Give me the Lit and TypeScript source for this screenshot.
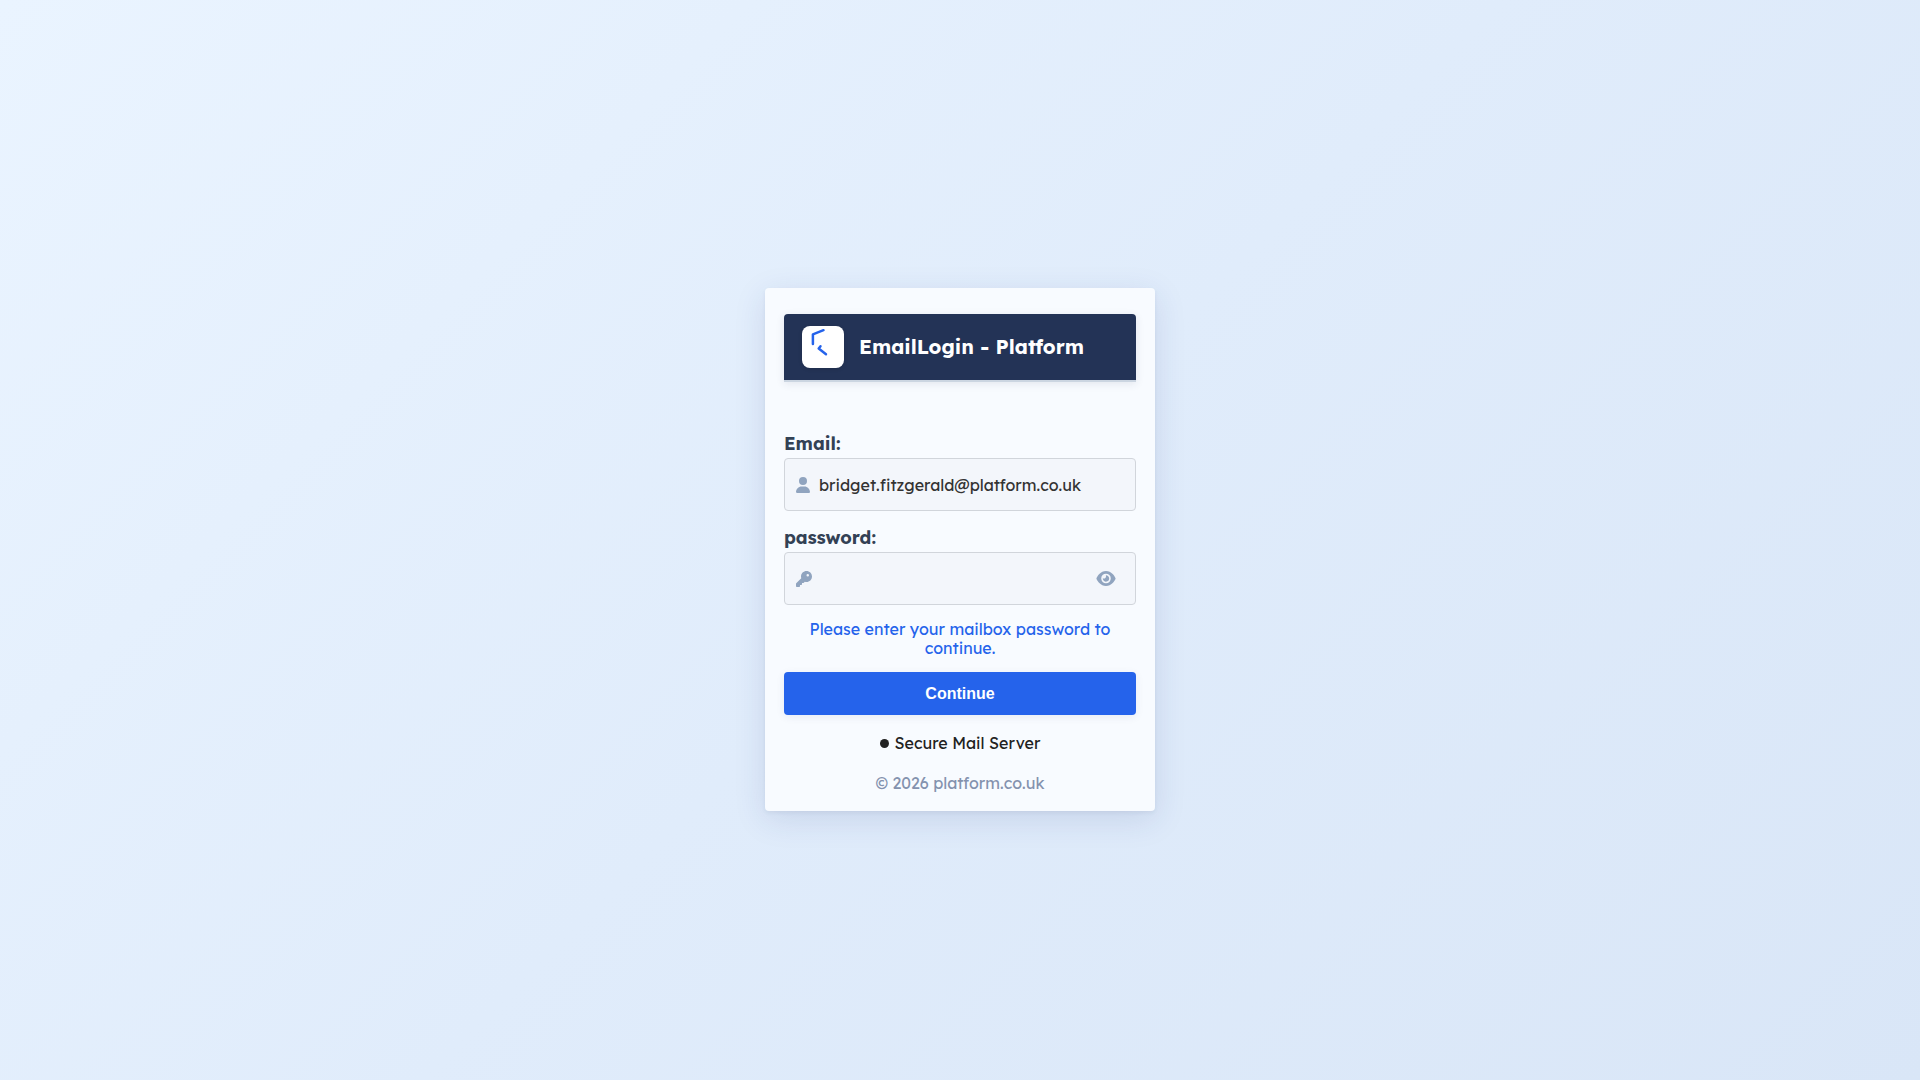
import { LitElement, html, css } from "lit";
import { customElement, state } from "lit/decorators.js";

@customElement("app-root")
export class AppRoot extends LitElement {
  static styles = css`
    :host {
      display: block;
      font-family: Lexend, Inter, "Liberation Sans", sans-serif;
      color: #222222;
    }
    * {
      box-sizing: border-box;
    }
    .page {
      min-height: 100vh;
      display: flex;
      align-items: center;
      justify-content: center;
      padding: 35px 16px 16px;
      background: linear-gradient(135deg, #eaf4ff 0%, #e0ecfb 50%, #d9e6f7 100%);
    }
    .card {
      width: 100%;
      max-width: 390px;
      padding: 26px 19px 18px;
      background: #f8fbff;
      border-radius: 4px;
      box-shadow: 0 8px 32px rgba(36, 52, 120, 0.13), 0 2px 4px rgba(36, 52, 87, 0.06);
    }
    .banner {
      display: flex;
      align-items: center;
      gap: 15px;
      padding: 12px 18px;
      margin-bottom: 50px;
      background: #233356;
      border-bottom: 2px solid #cbd5e1;
      border-radius: 4px 4px 0 0;
      box-shadow: 0 2px 8px rgba(36, 52, 87, 0.1);
    }
    .logo {
      display: flex;
      width: 42px;
      height: 42px;
      background: #ffffff;
      border-radius: 8px;
      box-shadow: 0 1px 4px rgba(0, 0, 0, 0.12);
    }
    .title {
      margin: 0;
      font-size: 20px;
      line-height: 26px;
      font-weight: 700;
      color: #ffffff;
    }
    .field {
      margin-bottom: 15px;
    }
    .label {
      display: block;
      padding-bottom: 2px;
      font-size: 18px;
      line-height: 24px;
      font-weight: 700;
      color: #334155;
    }
    .box {
      display: flex;
      align-items: center;
      height: 53px;
      padding: 0 19px 0 11px;
      gap: 9px;
      background: #f3f6fb;
      border: 1px solid #d1d5db;
      border-radius: 4px;
    }
    .box:focus-within {
      border-color: #2563eb;
    }
    .input {
      flex: 1;
      min-width: 0;
      height: 100%;
      padding: 0;
      border: 0;
      outline: 0;
      background: transparent;
      font-family: inherit;
      font-size: 16px;
      font-weight: 400;
      color: #333333;
    }
    .toggle {
      display: flex;
      padding: 0;
      border: 0;
      background: transparent;
      cursor: pointer;
    }
    .icon {
      display: block;
      flex: none;
      fill: #90a4bf;
    }
    .message {
      margin: 0 0 14px;
      padding: 0 16px;
      text-align: center;
      font-size: 16px;
      line-height: 19px;
      font-weight: 400;
      color: #2563eb;
    }
    .submit {
      display: block;
      width: 100%;
      height: 43px;
      margin-bottom: 18px;
      border: 0;
      border-radius: 4px;
      background: #2563eb;
      box-shadow: 0 2px 8px rgba(36, 52, 120, 0.08);
      font-family: "Liberation Sans", sans-serif;
      font-size: 16px;
      font-weight: 700;
      color: #ffffff;
      cursor: pointer;
    }
    .secure {
      display: flex;
      align-items: center;
      justify-content: center;
      gap: 6px;
      margin: 0 0 20px;
      font-size: 16px;
      line-height: 20px;
      font-weight: 400;
    }
    .dot {
      width: 9px;
      height: 9px;
      border-radius: 50%;
      background: #222222;
    }
    .copyright {
      margin: 0;
      text-align: center;
      font-size: 16px;
      line-height: 20px;
      font-weight: 400;
      color: #8492ae;
    }
  `;

  @state() private visible = false;

  private toggleVisible() {
    this.visible = !this.visible;
  }

  render() {
    return html`
      <main class="page">
        <section class="card">
          <header class="banner">
            <span class="logo">
              <svg width="42" height="42" viewBox="0 0 42 42" fill="none" stroke="#2563eb" stroke-width="2.5" stroke-linecap="round" stroke-linejoin="round" aria-hidden="true">
                <path d="M21.500 4.200 L10.900 8.300 V18" />
                <path d="M18.500 20.300 L16.700 22.600 L24 28.200" />
              </svg>
            </span>
            <h1 class="title">EmailLogin - Platform</h1>
          </header>

          <div class="field">
            <label class="label" for="email">Email:</label>
            <div class="box">
              <svg class="icon" width="14" height="16" viewBox="0 0 448 512" aria-hidden="true">
                <path d="M224 256A128 128 0 1 0 224 0a128 128 0 1 0 0 256zm-45.700 48C79.800 304 0 383.800 0 482.300C0 498.700 13.300 512 29.700 512H418.300c16.400 0 29.700-13.300 29.700-29.700C448 383.800 368.200 304 269.700 304H178.300z" />
              </svg>
              <input class="input" id="email" type="email" value="bridget.fitzgerald@platform.co.uk" readonly />
            </div>
          </div>

          <div class="field">
            <label class="label" for="password">password:</label>
            <div class="box">
              <svg class="icon" width="16" height="16" viewBox="0 0 512 512" aria-hidden="true">
                <path d="M336 352c97.200 0 176-78.800 176-176S433.200 0 336 0S160 78.800 160 176c0 18.700 2.900 36.800 8.300 53.700L7 391c-4.500 4.500-7 10.600-7 17v80c0 13.300 10.700 24 24 24h80c13.300 0 24-10.700 24-24V448h40c13.300 0 24-10.700 24-24V384h40c6.400 0 12.500-2.500 17-7l33.300-33.300c16.900 5.400 35 8.300 53.700 8.300zM376 96a40 40 0 1 1 0 80 40 40 0 1 1 0-80z" />
              </svg>
              <input class="input" id="password" type=${this.visible ? "text" : "password"} />
              <button class="toggle" type="button" aria-label="Show password" aria-pressed=${this.visible} @click=${this.toggleVisible}>
                <svg class="icon" width="20" height="17" viewBox="0 0 576 512" aria-hidden="true">
                  <path d="M288 32c-80.800 0-145.500 36.800-192.600 80.600C48.600 156 17.300 208 2.500 243.700c-3.300 7.900-3.300 16.700 0 24.600C17.300 304 48.600 356 95.400 399.400C142.500 443.200 207.200 480 288 480s145.500-36.800 192.600-80.600c46.800-43.500 78.100-95.400 93-131.100c3.300-7.900 3.300-16.700 0-24.600c-14.900-35.700-46.200-87.700-93-131.100C433.500 68.800 368.800 32 288 32zM144 256a144 144 0 1 1 288 0 144 144 0 1 1 -288 0zm144-64c0 35.300-28.700 64-64 64c-7.100 0-13.900-1.200-20.300-3.300c-5.500-1.800-11.900 1.600-11.700 7.400c.3 6.900 1.300 13.800 3.200 20.700c13.700 51.200 66.400 81.600 117.600 67.900s81.600-66.400 67.900-117.600c-11.100-41.500-47.800-69.400-88.600-71.100c-5.800-.2-9.200 6.100-7.400 11.700c2.100 6.400 3.300 13.200 3.300 20.300z" />
                </svg>
              </button>
            </div>
          </div>

          <p class="message">Please enter your mailbox password to continue.</p>
          <button class="submit" type="button">Continue</button>
          <p class="secure"><span class="dot"></span>Secure Mail Server</p>
          <p class="copyright">© 2026 platform.co.uk</p>
        </section>
      </main>
    `;
  }
}
